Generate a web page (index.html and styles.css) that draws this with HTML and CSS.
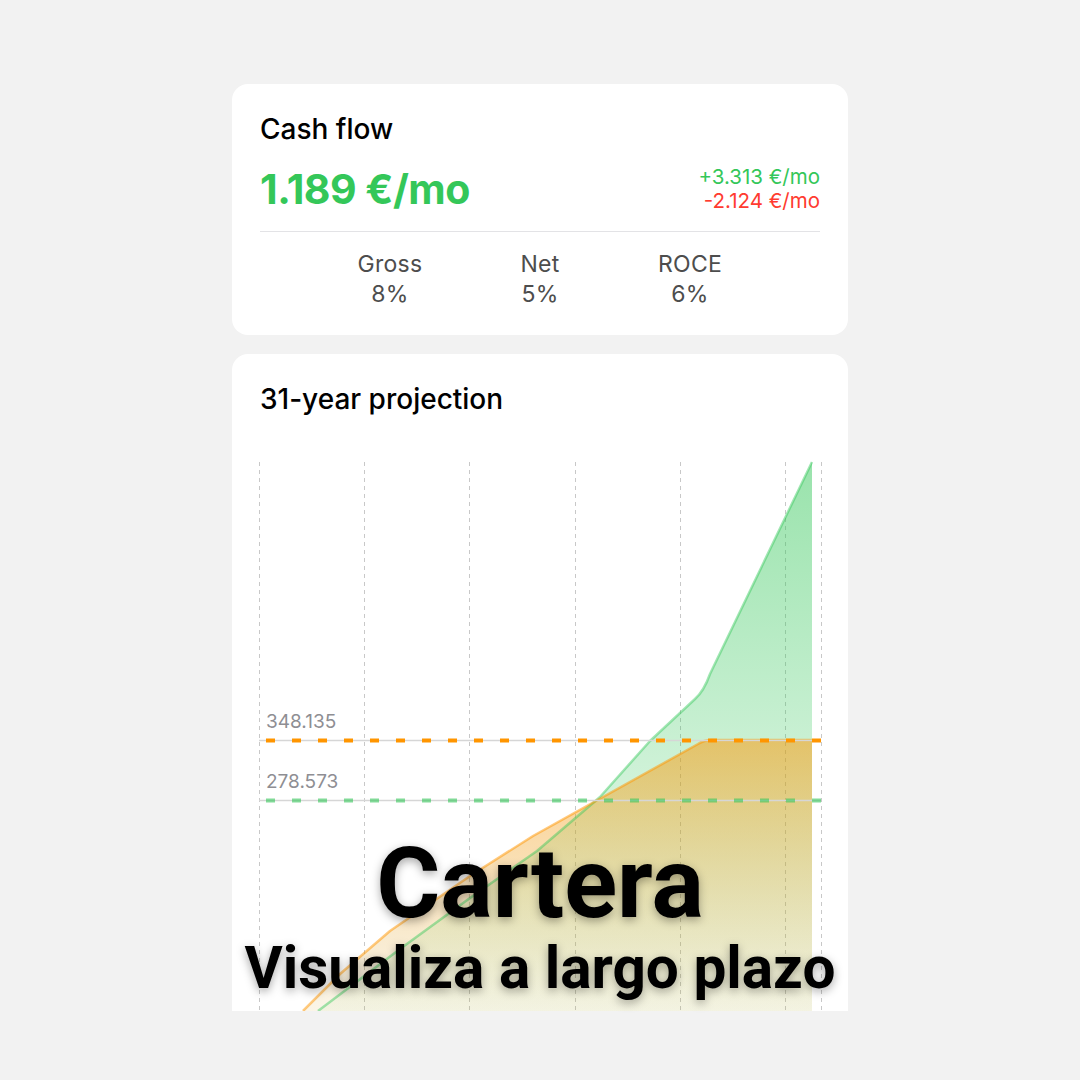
FILE: index.html
```html
<!DOCTYPE html>
<html lang="es">
<head>
<meta charset="utf-8">
<title>Cartera</title>
<link rel="stylesheet" href="styles.css">
</head>
<body>
<main class="page">
  <section class="card card-cash">
    <h2 class="card-title">Cash flow</h2>
    <div class="cash-row">
      <div class="cash-main">1.189 €/mo</div>
      <div class="cash-side">
        <div class="pos">+3.313 €/mo</div>
        <div class="neg">-2.124 €/mo</div>
      </div>
    </div>
    <hr class="divider">
    <div class="stats">
      <div class="stat"><div class="stat-label">Gross</div><div class="stat-value">8%</div></div>
      <div class="stat"><div class="stat-label">Net</div><div class="stat-value">5%</div></div>
      <div class="stat"><div class="stat-label">ROCE</div><div class="stat-value">6%</div></div>
    </div>
  </section>

  <section class="card card-proj">
    <h2 class="card-title">31-year projection</h2>
    <svg class="chart" viewBox="232 440 616 570" width="616" height="570" xmlns="http://www.w3.org/2000/svg">
      <defs>
        <linearGradient id="gGreen" gradientUnits="userSpaceOnUse" x1="0" y1="461" x2="0" y2="1010">
          <stop offset="0" stop-color="#34c759" stop-opacity="0.5"/>
          <stop offset="0.5" stop-color="#34c759" stop-opacity="0.27"/>
          <stop offset="1" stop-color="#34c759" stop-opacity="0.04"/>
        </linearGradient>
        <linearGradient id="gOrange" gradientUnits="userSpaceOnUse" x1="0" y1="739" x2="0" y2="1010">
          <stop offset="0" stop-color="#ff9500" stop-opacity="0.5"/>
          <stop offset="1" stop-color="#d9aa3a" stop-opacity="0.12"/>
        </linearGradient>
      </defs>
      <g class="grid">
        <line x1="259.5" y1="461" x2="259.5" y2="1010"/>
        <line x1="364.5" y1="461" x2="364.5" y2="1010"/>
        <line x1="469.5" y1="461" x2="469.5" y2="1010"/>
        <line x1="575.5" y1="461" x2="575.5" y2="1010"/>
        <line x1="680.5" y1="461" x2="680.5" y2="1010"/>
        <line x1="785.5" y1="461" x2="785.5" y2="1010"/>
        <line x1="821.5" y1="461" x2="821.5" y2="1010"/>
      </g>
      <path class="area-green" d="M318 1010 L400 948 L470 897 L537 850 L600 796 L650 740 L695 698 Q704 690 710 673 L812 461 L812 1010 Z"/>
      <path class="area-orange" d="M303 1010 L340 973 L390 930 L470 875 L533 835 L698 743 Q704 739 712 739 L812 739 L812 1010 Z"/>
      <path class="line-green" d="M318 1010 L400 948 L470 897 L537 850 L600 796 L650 740 L695 698 Q704 690 710 673 L812 461"/>
      <path class="line-orange" d="M303 1010 L340 973 L390 930 L470 875 L533 835 L698 743 Q704 739 712 739 L812 739"/>
      <line class="ref" x1="259" y1="739.5" x2="821" y2="739.5"/>
      <line class="ref" x1="259" y1="799.5" x2="821" y2="799.5"/>
      <line class="dash-orange" x1="266" y1="739.5" x2="821" y2="739.5"/>
      <line class="dash-green" x1="266" y1="799.5" x2="821" y2="799.5"/>
      <text class="ref-label" x="266" y="727">348.135</text>
      <text class="ref-label" x="266" y="787">278.573</text>
    </svg>
    <div class="overlay">
      <div class="overlay-title">Cartera</div>
      <div class="overlay-sub">Visualiza a largo plazo</div>
    </div>
  </section>
</main>
</body>
</html>
```

FILE: styles.css
```css
* { box-sizing: border-box; }
html, body {
  margin: 0;
  padding: 0;
  background: #f2f2f2;
}
body {
  width: 1080px;
  height: 1080px;
  overflow: hidden;
  font-family: Inter, "Noto Sans", "Liberation Sans", sans-serif;
  color: #000;
}
.page {
  width: 616px;
  margin: 0 auto;
  padding-top: 84px;
  display: flex;
  flex-direction: column;
  gap: 19px;
}
.card {
  background: #fff;
  border-radius: 16px;
}
.card-title {
  margin: 0;
  font-size: 28px;
  line-height: 32px;
  font-weight: 500;
  letter-spacing: 0;
}
.card-cash {
  padding: 29px 28px 27px;
}
.cash-row {
  margin-top: 20px;
  display: flex;
  justify-content: space-between;
  align-items: flex-start;
}
.cash-main {
  font-size: 41px;
  line-height: 48px;
  font-weight: 700;
  color: #34c759;
  letter-spacing: -0.5px;
}
.cash-side {
  text-align: right;
  font-size: 20.5px;
  line-height: 24px;
}
.pos { color: #34c759; }
.neg { color: #ff3b30; }
.divider {
  margin: 18px 0 0;
  border: 0;
  height: 1px;
  background: #e3e3e6;
}
.stats {
  padding-top: 18px;
  display: flex;
  justify-content: center;
}
.stat {
  width: 150px;
  text-align: center;
  color: #4d4d4d;
  font-size: 23px;
  line-height: 28px;
  letter-spacing: 0.3px;
}
.stat-value { margin-top: 2px; }

.card-proj {
  position: relative;
  height: 657px;
  padding-top: 29px;
  border-radius: 16px 16px 0 0;
}
.card-proj .card-title {
  padding-left: 28px;
}
.chart {
  display: block;
  margin-top: 26px;
}
.grid line {
  stroke: #c8c8c8;
  stroke-width: 1;
  stroke-dasharray: 4 4;
}
.area-green { fill: url(#gGreen); }
.area-orange { fill: url(#gOrange); }
.line-green {
  fill: none;
  stroke: #34c759;
  stroke-opacity: 0.45;
  stroke-width: 2.5;
  stroke-linejoin: round;
}
.line-orange {
  fill: none;
  stroke: #ff9500;
  stroke-opacity: 0.5;
  stroke-width: 2.5;
  stroke-linejoin: round;
}
.ref {
  stroke: #d6d6d6;
  stroke-width: 1.5;
}
.dash-orange {
  stroke: #ff9500;
  stroke-width: 4;
  stroke-dasharray: 9 17;
}
.dash-green {
  stroke: #34c759;
  stroke-opacity: 0.6;
  stroke-width: 4;
  stroke-dasharray: 9 17;
}
.ref-label {
  font-family: Inter, "Noto Sans", sans-serif;
  font-size: 19px;
  fill: #8e8e93;
}
.overlay {
  position: absolute;
  left: -40px;
  right: -40px;
  top: 480px;
  text-align: center;
  font-family: Roboto, "Liberation Sans", sans-serif;
  font-weight: 700;
  color: #000;
  text-shadow: 0 3px 10px rgba(0, 0, 0, 0.35);
}
.overlay-title {
  font-size: 98px;
  line-height: 100px;
}
.overlay-sub {
  margin-top: 4px;
  font-size: 58.5px;
  line-height: 60px;
}
```
